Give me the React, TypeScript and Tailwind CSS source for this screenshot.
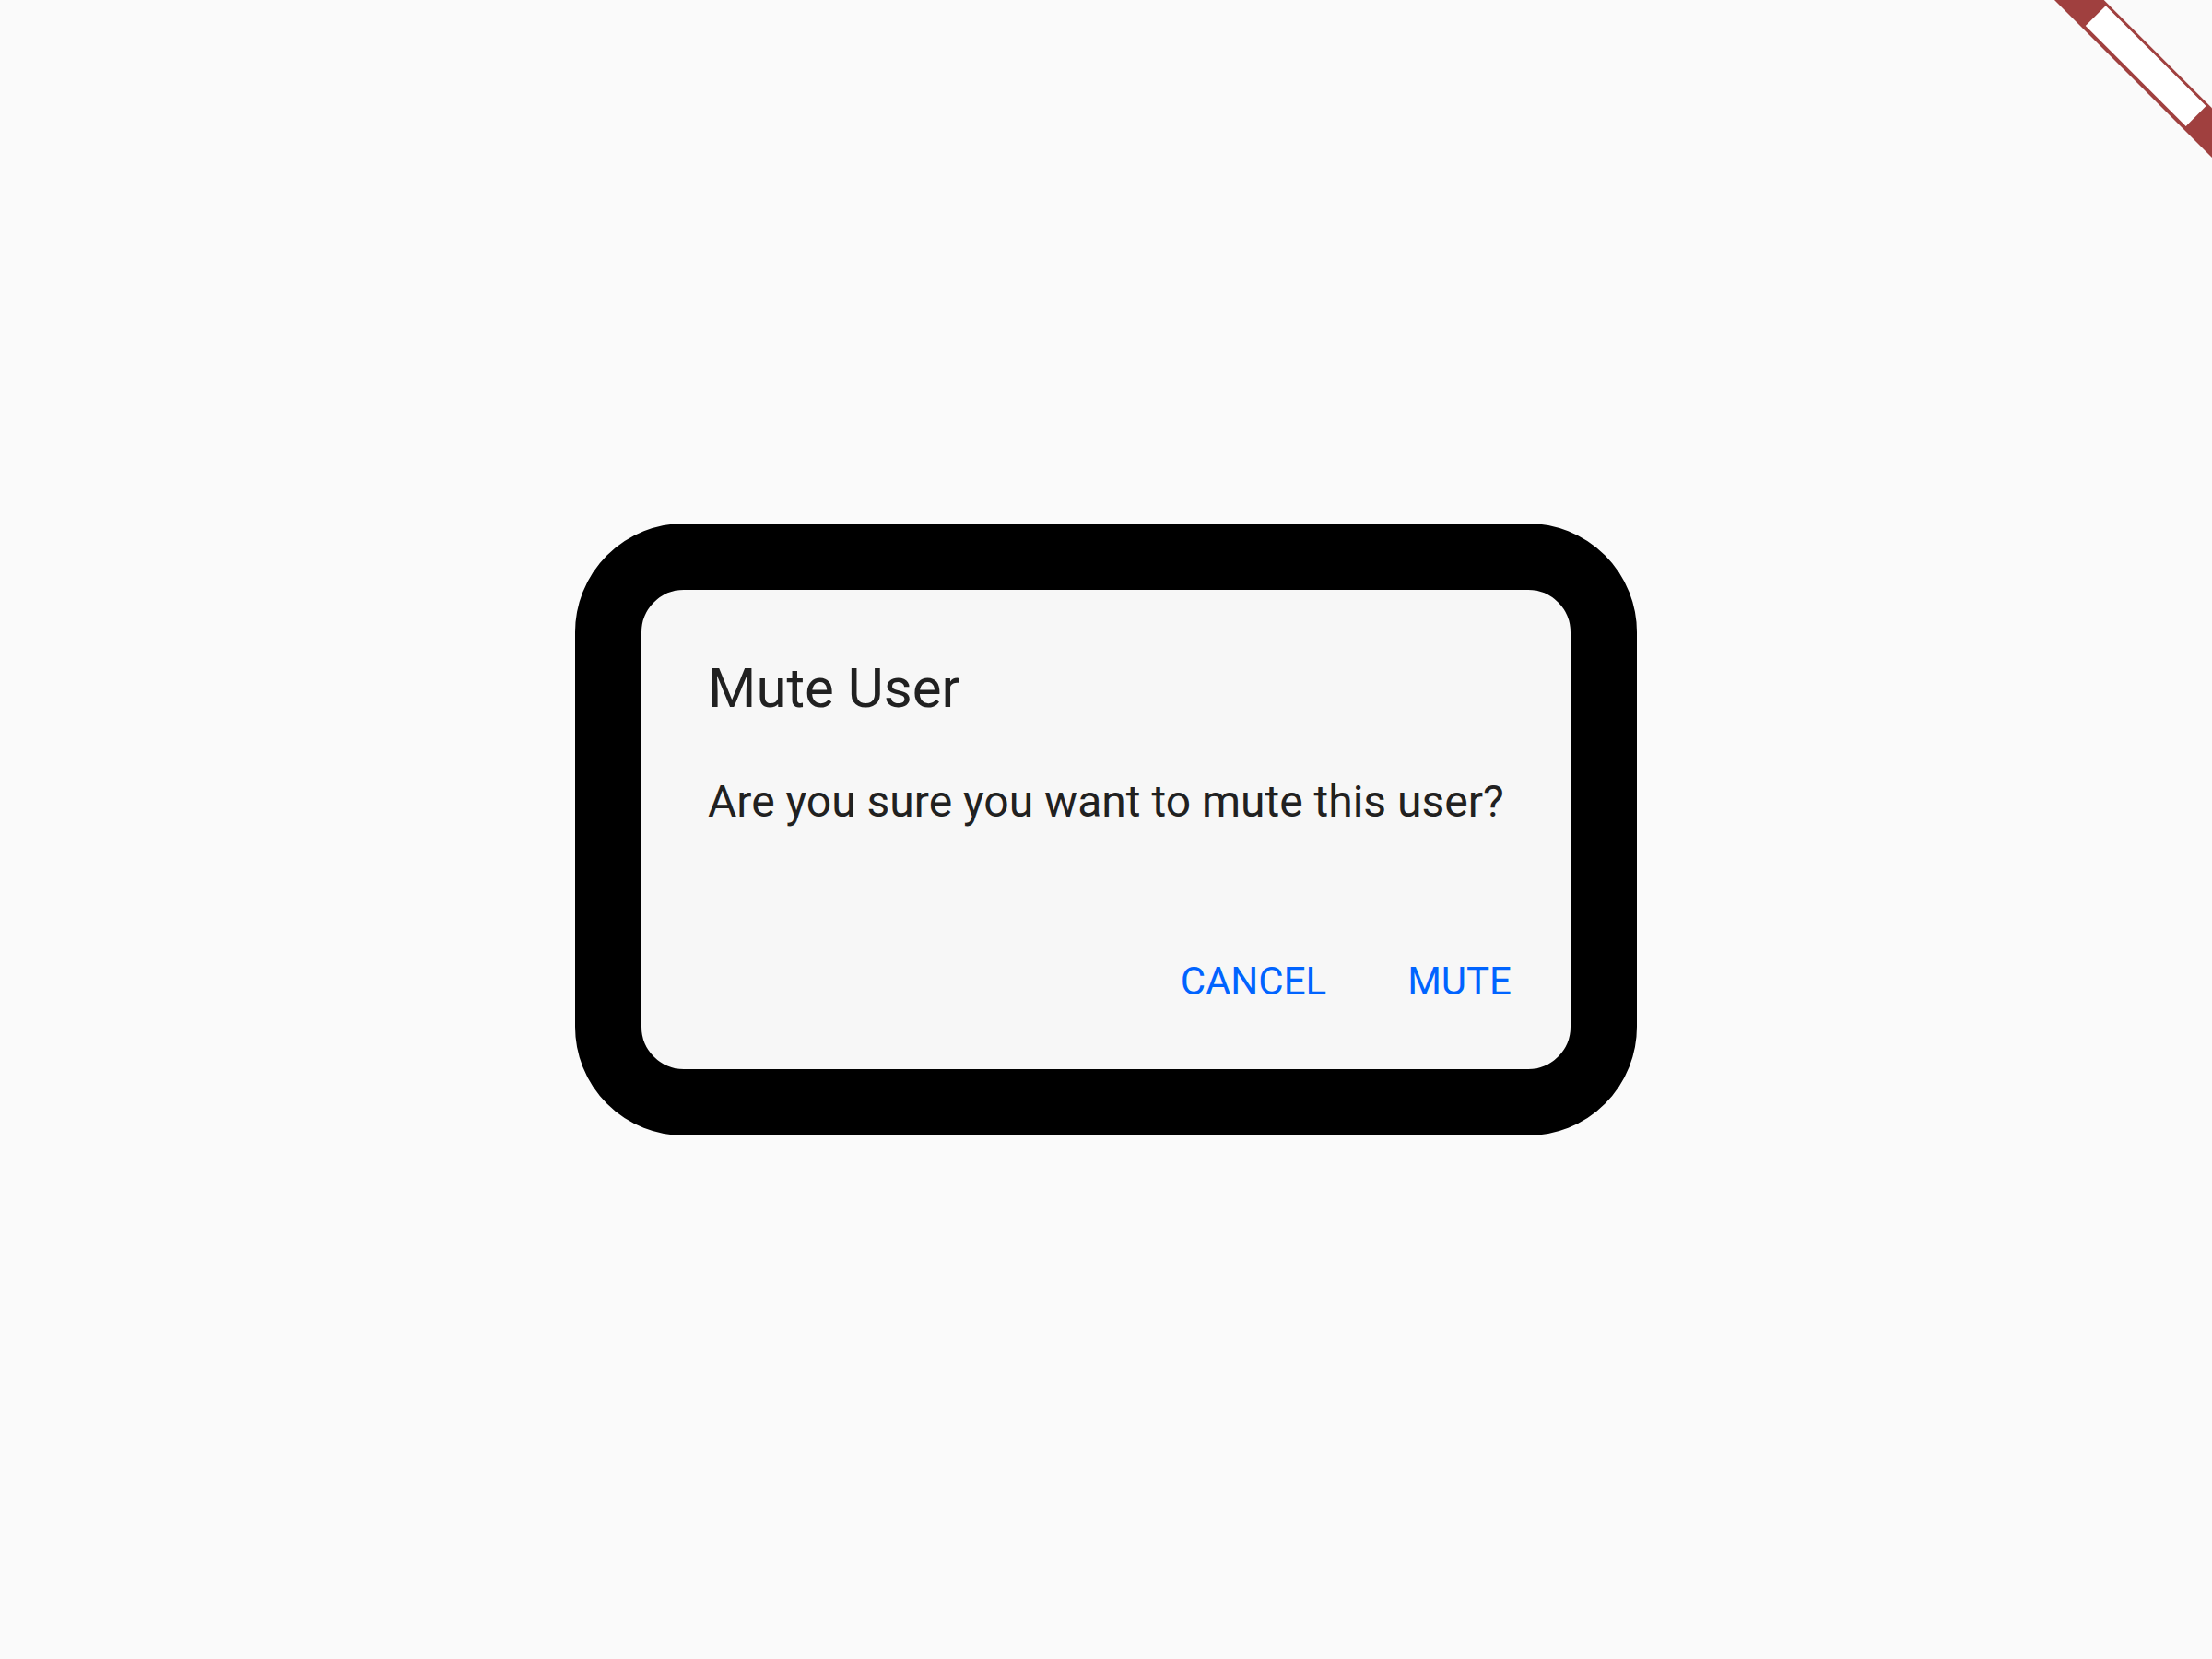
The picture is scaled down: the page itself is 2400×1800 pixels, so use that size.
export default function App() {
    return (
        <div className="relative w-[2400px] h-[1800px] overflow-hidden bg-[#fafafa] flex items-center justify-center font-['Roboto',sans-serif]">
            <div className="w-[1152px] border-[72px] border-black rounded-[118px] bg-[#f7f7f7] flex flex-col">
                <h2 className="pt-[72px] px-[72px] text-[60px] leading-[1.172] font-normal text-[#212121]">
                    Mute User
                </h2>
                <p className="mt-[60px] px-[72px] text-[48px] leading-[1.172] text-[#212121] whitespace-nowrap">
                    Are you sure you want to mute this user?
                </p>
                <div className="mt-[142px] pb-[71px] pr-[64px] flex justify-end gap-[88px] text-[42px] leading-[1.172] text-[#0064ff]">
                    <button className="uppercase">Cancel</button>
                    <button className="uppercase">Mute</button>
                </div>
            </div>

            {/* debug style ribbon */}
            <div className="absolute top-0 right-0 w-[200px] h-[200px] overflow-hidden pointer-events-none">
                <div className="absolute left-[-72px] top-[53px] w-[400px] h-[37.5px] rotate-45 bg-[#a0403f] flex items-center justify-center">
                    <div className="w-[154px] h-[31px] bg-white" />
                </div>
            </div>
        </div>
    )
}
